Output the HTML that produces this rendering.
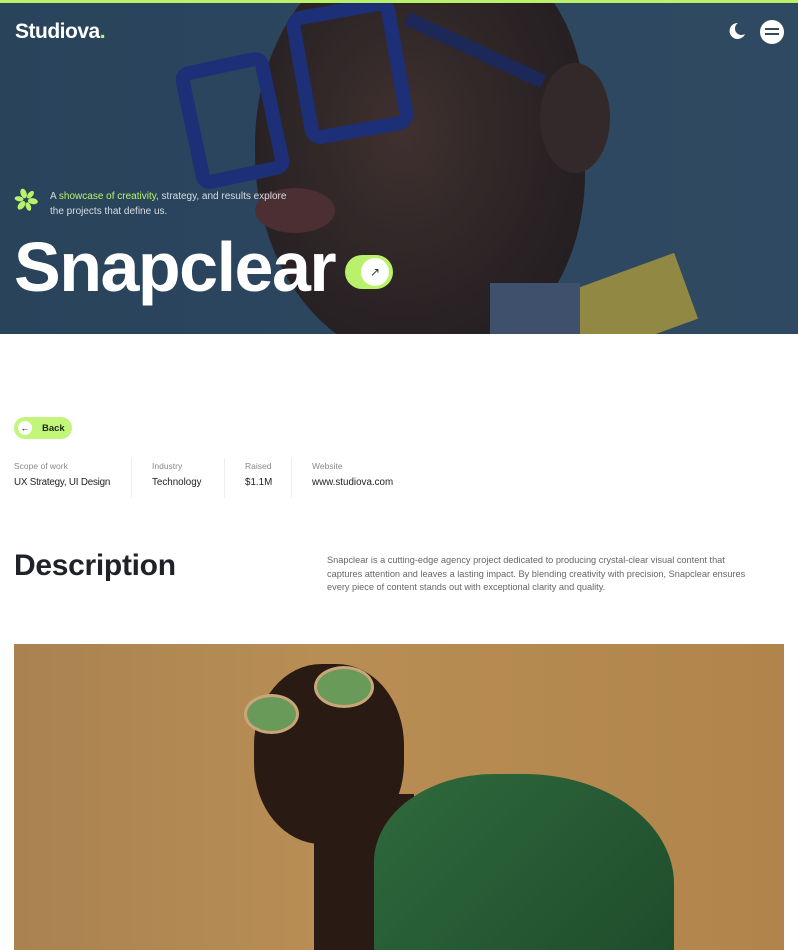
<!DOCTYPE html>
<html><head><meta charset="utf-8"><style>
*{margin:0;padding:0;box-sizing:border-box}
body{width:798px;height:950px;overflow:hidden;background:#fff;font-family:"Liberation Sans",sans-serif;position:relative}
.hero{position:absolute;left:0;top:0;width:798px;height:334px;background:#2f4a63;border-top:3px solid #b9f26a;overflow:hidden}
.abs{position:absolute}
</style></head><body>
<div class="hero">
  <div class="abs" style="left:0;top:0;width:798px;height:334px;background:linear-gradient(90deg,#2d4961 0%,#2f4b64 30%,#36516a 100%)"></div>
  <div class="abs" style="left:255px;top:-60px;width:330px;height:420px;border-radius:48% 40% 45% 50%;background:radial-gradient(ellipse at 45% 45%,#4a3026 0%,#2e1d18 55%,#1d1412 100%)"></div>
  <div class="abs" style="left:540px;top:60px;width:70px;height:110px;border-radius:50%;background:#3a2620"></div>
  <div class="abs" style="left:560px;top:270px;width:130px;height:70px;background:#b7a541;transform:rotate(-20deg)"></div>
  <div class="abs" style="left:490px;top:280px;width:90px;height:60px;background:#4a5a78"></div>
  <div class="abs" style="left:255px;top:185px;width:80px;height:45px;border-radius:50%;background:#5a2e2a"></div>
  <div class="abs" style="left:185px;top:55px;width:95px;height:125px;border:14px solid #1c2e86;border-radius:14px;transform:rotate(-12deg)"></div>
  <div class="abs" style="left:295px;top:0px;width:110px;height:135px;border:14px solid #1c2e86;border-radius:16px;transform:rotate(-10deg)"></div>
  <div class="abs" style="left:400px;top:40px;width:150px;height:14px;background:#1b255c;transform:rotate(25deg)"></div>
  <div class="abs" style="left:0;top:0;width:798px;height:334px;background:rgba(30,50,75,0.25)"></div>

  <div class="abs" style="left:15px;top:17px;color:#fff;font-size:21px;font-weight:bold;letter-spacing:-0.5px">Studiova<span style="color:#b9f26a">.</span></div>
  <svg class="abs" style="left:726px;top:18px" width="20" height="20" viewBox="0 0 20 20"><path d="M12 2a8 8 0 1 0 7 11a6.5 6.5 0 0 1-7-11z" fill="#fff"/></svg>
  <div class="abs" style="left:760px;top:17px;width:24px;height:24px;border-radius:50%;background:#fff"><div class="abs" style="left:5px;top:8px;width:14px;height:2px;background:#2f4a63"></div><div class="abs" style="left:5px;top:13px;width:14px;height:2px;background:#2f4a63"></div></div>

  <svg class="abs" style="left:14px;top:185px" width="24" height="24" viewBox="0 0 24 24" fill="#b9f26a">
    <ellipse cx="12" cy="5" rx="3" ry="5" transform="rotate(-20 12 12)"/>
    <ellipse cx="12" cy="5" rx="3" ry="5" transform="rotate(100 12 12)"/>
    <ellipse cx="12" cy="5" rx="3" ry="5" transform="rotate(220 12 12)"/>
    <ellipse cx="12" cy="5" rx="2.5" ry="4.5" transform="rotate(40 12 12)"/>
    <ellipse cx="12" cy="5" rx="2.5" ry="4.5" transform="rotate(160 12 12)"/>
    <ellipse cx="12" cy="5" rx="2.5" ry="4.5" transform="rotate(280 12 12)"/>
  </svg>
  <div class="abs" style="left:50px;top:186px;color:#d8dde2;font-size:10px;line-height:15px">A <span style="color:#b9f26a">showcase of creativity</span>, strategy, and results explore<br>the projects that define us.</div>
  <div class="abs" style="left:14px;top:221px;color:#fff;font-size:70px;font-weight:bold;letter-spacing:-1.5px;line-height:86px">Snapclear</div>
  <div class="abs" style="left:345px;top:252px;width:48px;height:34px;border-radius:17px;background:#b9f26a"><div class="abs" style="left:16px;top:3px;width:28px;height:28px;border-radius:50%;background:#fff;color:#333;font-size:12px;text-align:center;line-height:28px">↗</div></div>
</div>

<div class="abs" style="left:14px;top:417px;width:58px;height:22px;border-radius:11px;background:#c3f57a"><div class="abs" style="left:4px;top:4px;width:14px;height:14px;border-radius:50%;background:#fff;font-size:9px;text-align:center;line-height:14px">←</div><div class="abs" style="left:28px;top:6px;font-size:9.5px;font-weight:bold;color:#1d2a1a">Back</div></div>

<div class="abs" style="left:14px;top:461px;font-size:8.5px;color:#888">Scope of work</div>
<div class="abs" style="left:14px;top:477px;font-size:9.8px;color:#222;letter-spacing:-0.2px">UX Strategy, UI Design</div>
<div class="abs" style="left:131px;top:458px;width:1px;height:40px;background:#eee"></div>
<div class="abs" style="left:152px;top:461px;font-size:8.5px;color:#888">Industry</div>
<div class="abs" style="left:152px;top:477px;font-size:9.8px;color:#222">Technology</div>
<div class="abs" style="left:224px;top:458px;width:1px;height:40px;background:#eee"></div>
<div class="abs" style="left:245px;top:461px;font-size:8.5px;color:#888">Raised</div>
<div class="abs" style="left:245px;top:477px;font-size:9.8px;color:#222">$1.1M</div>
<div class="abs" style="left:291px;top:458px;width:1px;height:40px;background:#eee"></div>
<div class="abs" style="left:312px;top:461px;font-size:8.5px;color:#888">Website</div>
<div class="abs" style="left:312px;top:477px;font-size:9.8px;color:#222">www.studiova.com</div>

<div class="abs" style="left:14px;top:549px;font-size:30px;font-weight:bold;color:#1f2329;letter-spacing:-0.3px">Description</div>
<div class="abs" style="left:327px;top:554px;width:428px;font-size:9.2px;line-height:13.5px;color:#666">Snapclear is a cutting-edge agency project dedicated to producing crystal-clear visual content that captures attention and leaves a lasting impact. By blending creativity with precision, Snapclear ensures every piece of content stands out with exceptional clarity and quality.</div>

<div class="abs" style="left:14px;top:644px;width:770px;height:306px;overflow:hidden;background:linear-gradient(90deg,#a98250 0%,#b98e55 40%,#b0844a 100%)">
  <div class="abs" style="left:240px;top:20px;width:150px;height:180px;border-radius:45%;background:#2a1a14"></div>
  <div class="abs" style="left:300px;top:150px;width:100px;height:160px;background:#2a1a14"></div>
  <div class="abs" style="left:360px;top:130px;width:300px;height:220px;border-radius:40% 50% 0 0;background:linear-gradient(135deg,#2f6a3d,#1d4a2a)"></div>
  <div class="abs" style="left:230px;top:50px;width:55px;height:40px;border-radius:50%;background:#6a9a5a;border:3px solid #c9a67a"></div>
  <div class="abs" style="left:300px;top:22px;width:60px;height:42px;border-radius:50%;background:#6a9a5a;border:3px solid #c9a67a"></div>
</div>
</body></html>
